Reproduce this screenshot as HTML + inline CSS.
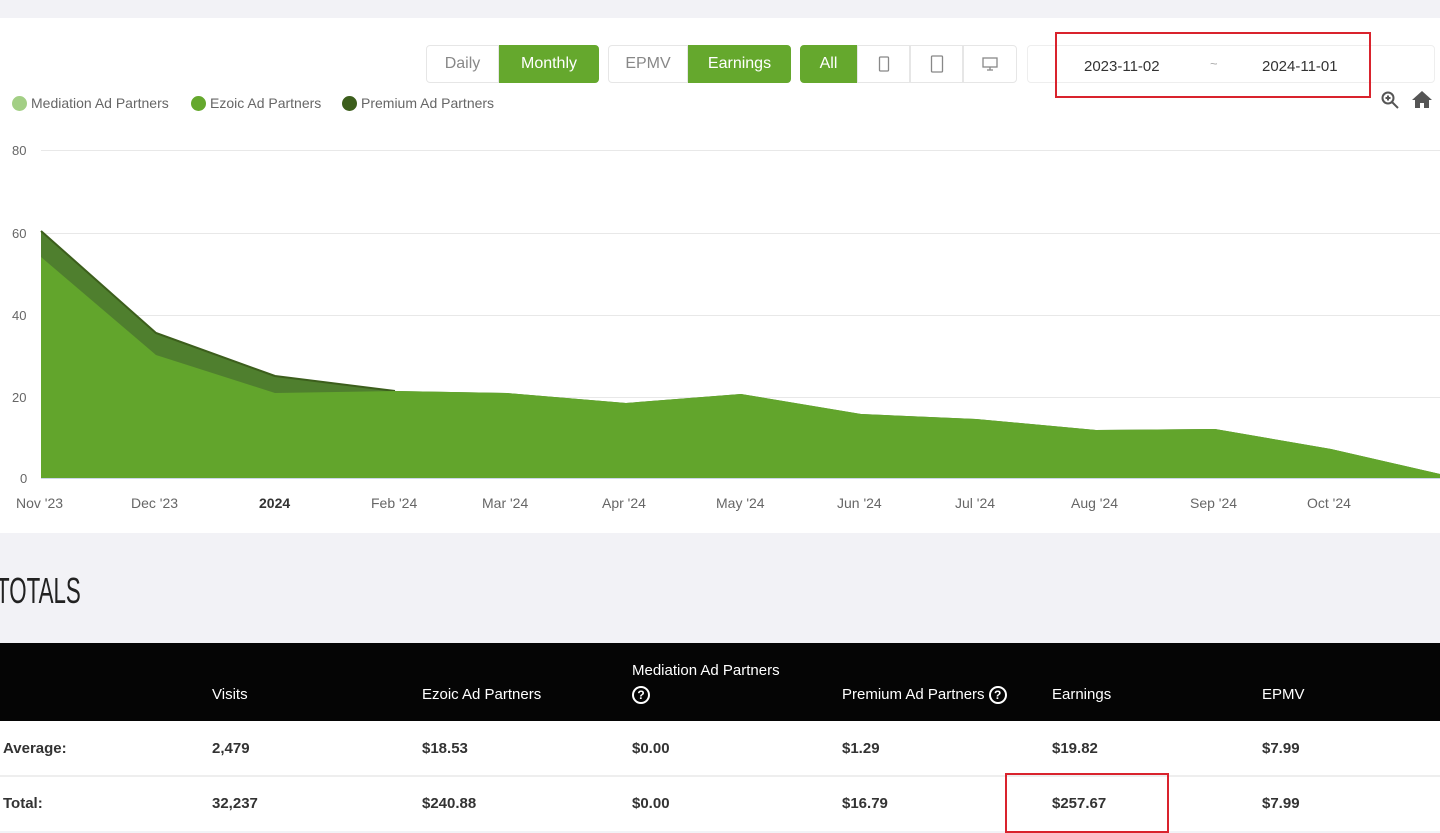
<!DOCTYPE html>
<html><head><meta charset="utf-8"><style>
*{margin:0;padding:0;box-sizing:border-box}
body{width:1440px;height:831px;overflow:hidden;background:#f2f2f6;font-family:"Liberation Sans",sans-serif;position:relative}
.a{position:absolute}
.panel{left:0;top:18px;width:1440px;height:515px;background:#fff}
.btn{position:absolute;top:45px;height:38px;border:1px solid #e6e6e6;background:#fff;color:#888;font-size:16px;display:flex;align-items:center;justify-content:center}
.g{background:#65a82d;color:#fff;border-color:#65a82d}
.lg{font-size:14px;color:#666;display:flex;align-items:center}
.dot{width:15px;height:15px;border-radius:50%;display:inline-block;margin-right:4px}
.yl{font-size:13px;color:#666}
.xl{font-size:14px;color:#666;top:495px}
.h{color:#fff;font-size:15px}
.c{color:#333;font-size:15px;font-weight:bold}
.q{display:inline-block;width:18px;height:18px;border:2px solid #fff;border-radius:50%;font-size:12px;text-align:center;line-height:14px;font-weight:bold;vertical-align:middle}
</style></head><body>
<div class="a panel"></div>
<div class="btn" style="left:426px;width:73px;border-radius:4px 0 0 4px">Daily</div>
<div class="btn g" style="left:499px;width:100px;border-radius:0 4px 4px 0">Monthly</div>
<div class="btn" style="left:608px;width:80px;border-radius:4px 0 0 4px">EPMV</div>
<div class="btn g" style="left:688px;width:103px;border-radius:0 4px 4px 0">Earnings</div>
<div class="btn g" style="left:800px;width:57px;border-radius:4px 0 0 4px">All</div>
<div class="btn" style="left:857px;width:53px"><svg width="12" height="16"><rect x="1.5" y="1" width="9" height="14" rx="1" fill="none" stroke="#888" stroke-width="1.3"/></svg></div>
<div class="btn" style="left:910px;width:53px"><svg width="14" height="18"><rect x="1.5" y="1" width="11" height="16" rx="1" fill="none" stroke="#888" stroke-width="1.3"/></svg></div>
<div class="btn" style="left:963px;width:54px;border-radius:0 4px 4px 0"><svg width="16" height="14"><rect x="1" y="1" width="14" height="9" fill="none" stroke="#888" stroke-width="1.3"/><path d="M8 10v3M5 13h6" stroke="#888" stroke-width="1.3"/></svg></div>
<div class="btn" style="left:1027px;width:408px;border-color:#eee;border-radius:4px"></div>
<div class="a" style="left:1055px;top:32px;width:316px;height:66px;border:2px solid #d9232d"></div>
<div class="a" style="left:1084px;top:58px;font-size:15px;color:#333">2023-11-02</div>
<div class="a" style="left:1210px;top:56px;font-size:13px;color:#aaa">~</div>
<div class="a" style="left:1262px;top:58px;font-size:15px;color:#333">2024-11-01</div>
<svg class="a" style="left:1380px;top:90px" width="20" height="20"><circle cx="8" cy="8" r="5.5" fill="none" stroke="#555" stroke-width="2"/><path d="M12 12l6 6M5.5 8h5M8 5.5v5" stroke="#555" stroke-width="2"/></svg>
<svg class="a" style="left:1411px;top:89px" width="22" height="20"><path d="M11 2L1 11h3v8h5v-5h4v5h5v-8h3z" fill="#555"/></svg>
<div class="a lg" style="left:12px;top:95px"><span class="dot" style="background:#a3cf85"></span>Mediation Ad Partners</div>
<div class="a lg" style="left:191px;top:95px"><span class="dot" style="background:#65a82d"></span>Ezoic Ad Partners</div>
<div class="a lg" style="left:342px;top:95px"><span class="dot" style="background:#3c5e1c"></span>Premium Ad Partners</div>
<svg class="a" style="left:0;top:0" width="1440" height="533">
<g stroke="#e8e8e8" stroke-width="1"><path d="M41 150.5H1440M41 233.5H1440M41 315.5H1440M41 397.5H1440"/></g>
<path d="M41 231L156 333L275 376L395 391L507 393L626 403L741 394L861 414L976 419L1096 430L1215 429L1331 449L1440 474V478H41Z" fill="#4f7f2e"/>
<path d="M41 231L156 333L275 376L395 391" fill="none" stroke="#3c5e1c" stroke-width="2"/>
<path d="M41 257L156 355L275 393L395 391L507 393L626 403L741 394L861 414L976 419L1096 430L1215 429L1331 449L1440 474V478H41Z" fill="#62a52c"/>
<path d="M41 478.5H1440" stroke="#ccd6eb"/>
</svg>
<div class="a yl" style="left:12px;top:143px">80</div>
<div class="a yl" style="left:12px;top:226px">60</div>
<div class="a yl" style="left:12px;top:308px">40</div>
<div class="a yl" style="left:12px;top:390px">20</div>
<div class="a yl" style="left:20px;top:471px">0</div>
<div class="a xl" style="left:16px">Nov '23</div>
<div class="a xl" style="left:131px">Dec '23</div>
<div class="a xl" style="left:259px;font-weight:bold;color:#333">2024</div>
<div class="a xl" style="left:371px">Feb '24</div>
<div class="a xl" style="left:482px">Mar '24</div>
<div class="a xl" style="left:602px">Apr '24</div>
<div class="a xl" style="left:716px">May '24</div>
<div class="a xl" style="left:837px">Jun '24</div>
<div class="a xl" style="left:955px">Jul '24</div>
<div class="a xl" style="left:1071px">Aug '24</div>
<div class="a xl" style="left:1190px">Sep '24</div>
<div class="a xl" style="left:1307px">Oct '24</div>
<div class="a" style="left:-4px;top:570px;font-size:36px;color:#222;transform:scaleX(0.62);transform-origin:left">TOTALS</div>
<div class="a" style="left:0;top:643px;width:1440px;height:78px;background:#050505"></div>
<div class="a" style="left:0;top:721px;width:1440px;height:110px;background:#fff"></div>
<div class="a" style="left:0;top:775px;width:1440px;height:2px;background:#eee"></div>
<div class="a h" style="left:212px;top:686px">Visits</div>
<div class="a h" style="left:422px;top:686px">Ezoic Ad Partners</div>
<div class="a h" style="left:632px;top:662px">Mediation Ad Partners</div>
<div class="a h" style="left:632px;top:686px"><span class="q">?</span></div>
<div class="a h" style="left:842px;top:686px">Premium Ad Partners <span class="q">?</span></div>
<div class="a h" style="left:1052px;top:686px">Earnings</div>
<div class="a h" style="left:1262px;top:686px">EPMV</div>
<div class="a c" style="left:3px;top:740px">Average:</div>
<div class="a c" style="left:212px;top:740px">2,479</div>
<div class="a c" style="left:422px;top:740px">$18.53</div>
<div class="a c" style="left:632px;top:740px">$0.00</div>
<div class="a c" style="left:842px;top:740px">$1.29</div>
<div class="a c" style="left:1052px;top:740px">$19.82</div>
<div class="a c" style="left:1262px;top:740px">$7.99</div>
<div class="a c" style="left:3px;top:795px">Total:</div>
<div class="a c" style="left:212px;top:795px">32,237</div>
<div class="a c" style="left:422px;top:795px">$240.88</div>
<div class="a c" style="left:632px;top:795px">$0.00</div>
<div class="a c" style="left:842px;top:795px">$16.79</div>
<div class="a c" style="left:1052px;top:795px">$257.67</div>
<div class="a c" style="left:1262px;top:795px">$7.99</div>
<div class="a" style="left:1005px;top:773px;width:164px;height:60px;border:2px solid #d9232d"></div>
</body></html>
